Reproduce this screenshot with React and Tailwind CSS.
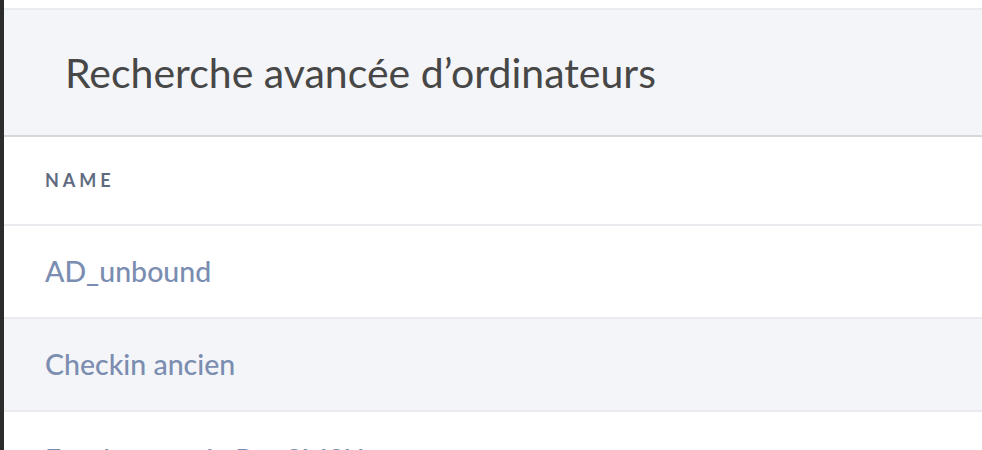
export default function App() {
  const rows = [
    { name: 'AD_unbound', bg: 'bg-white' },
    { name: 'Checkin ancien', bg: 'bg-[#f4f5f8]' },
    { name: 'Enrolement de Pas SMSU', bg: 'bg-white pt-[3px]' },
  ];

  return (
    <div className="flex h-[450px] w-[982px] overflow-hidden bg-white font-['Lato',sans-serif]">
      <div className="w-1 shrink-0 bg-[#2c2c2c]" />
      <div className="flex-1">
        <div className="h-2 bg-white" />
        {/* Header */}
        <div className="flex h-[129px] items-center border-y-2 border-t-[#e8ebef] border-b-[#d5d7db] bg-[#f4f5f8] pl-[61px]">
          <h1 className="text-[41px] font-normal text-[#474747]">Recherche avancée d’ordinateurs</h1>
        </div>

        {/* Table */}
        <div className="flex h-[89px] items-center border-b-2 border-[#e9ebef] pl-[41px]">
          <span className="text-[18px] font-bold tracking-[0.22em] text-[#5f6b7f]">NAME</span>
        </div>
        {rows.map((r) => (
          <div key={r.name} className={`flex h-[93px] shrink-0 items-center border-b-2 border-[#e9ebef] pl-[41px] ${r.bg}`}>
            <span className="text-[28.5px] font-medium text-[#7b8db0]">{r.name}</span>
          </div>
        ))}
      </div>
    </div>
  );
}
